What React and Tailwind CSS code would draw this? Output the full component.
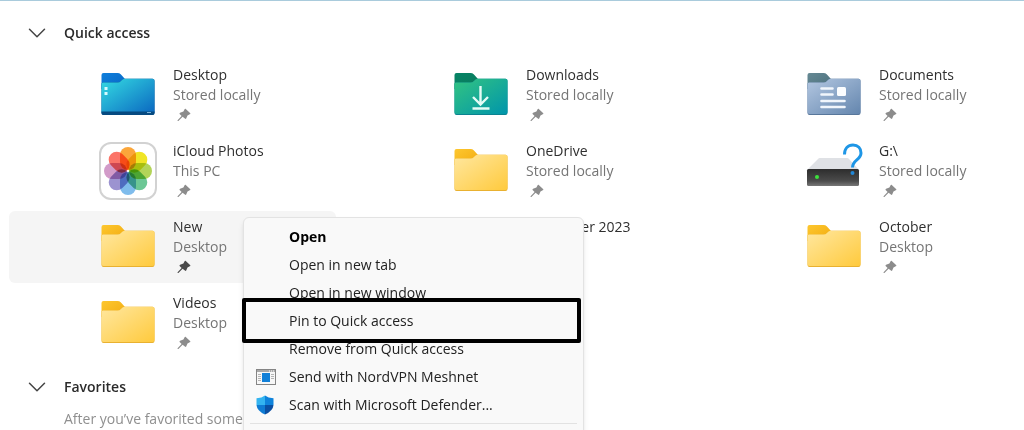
import { useId } from "react";
import { ChevronDown } from "lucide-react";

const folderColors = {
  yellow: { tab: ["#fdc72f", "#f2ab10"], body: ["#ffe79f", "#ffca3d"], edge: "#e9b130" },
  desktop: { tab: ["#0f7fdc", "#0867c4"], body: ["#34dbe2", "#0a66c0"], edge: "#06508f" },
  downloads: { tab: ["#068466", "#0b7a5c"], body: ["#33c481", "#0095ab"], edge: "#0b8390" },
  documents: { tab: ["#668994", "#4b707d"], body: ["#b3c7e1", "#6486ae"], edge: "#58779b" },
};

function Folder({ color, children }) {
  const id = useId();
  const c = folderColors[color];
  return (
    <svg viewBox="0 0 58 58" className="size-[58px] shrink-0" aria-hidden="true">
      <defs>
        <linearGradient id={id + "tab"} x1="0" y1="0" x2="1" y2="1">
          <stop offset="0" stopColor={c.tab[0]} />
          <stop offset="1" stopColor={c.tab[1]} />
        </linearGradient>
        <linearGradient id={id + "body"} x1="0" y1="0" x2="1" y2="1">
          <stop offset="0" stopColor={c.body[0]} />
          <stop offset="1" stopColor={c.body[1]} />
        </linearGradient>
      </defs>
      <path d="M2.500 9a2 2 0 0 1 2-2h14q2 0 3.200 1.300L26 13v10H2.500z" fill={`url(#${id}tab)`} />
      <path d="M2.500 18q0-1.500 1.500-1.500h14.500q2 0 3.500-1.600l1.200-1.100q1.200-1.100 3-1.100H53.500a2 2 0 0 1 2 2V47a2 2 0 0 1-2 2H4.500a2 2 0 0 1-2-2z" fill={c.edge} />
      <path d="M2.500 18q0-1.500 1.500-1.500h14.500q2 0 3.500-1.600l1.200-1.100q1.200-1.100 3-1.100H53.500a2 2 0 0 1 2 2V46a2 2 0 0 1-2 2H4.500a2 2 0 0 1-2-2z" fill={`url(#${id}body)`} />
      {children}
    </svg>
  );
}

function DesktopIcon() {
  return (
    <Folder color="desktop">
      <path d="M2.500 45.500h53v1.500a2 2 0 0 1-2 2H4.500a2 2 0 0 1-2-2z" fill="#064a80" />
      <path d="M5.500 21h3v3h-3zM5.500 26h3v3h-3z" fill="#d5fbff" />
      <path d="M48 46.500h4" stroke="#7db4d8" />
    </Folder>
  );
}

function DownloadsIcon() {
  return (
    <Folder color="downloads">
      <path d="M28.500 20v18M21 31l7.500 7.500L36 31M20.500 42.500h17" fill="none" stroke="#e4fbf6" strokeWidth="2.400" />
    </Folder>
  );
}

function DocumentsIcon() {
  return (
    <Folder color="documents">
      <path d="M16.500 22.500h11M16.500 28.500h11M16.500 35h23M16.500 41h23" stroke="#f1f6fc" strokeWidth="2.600" strokeLinecap="round" />
      <rect x="32" y="21" width="9" height="9" rx="1.500" fill="#fbfdff" />
    </Folder>
  );
}

function FolderIcon() {
  return <Folder color="yellow" />;
}

const petals = ["#fba63a", "#f0e526", "#b3d458", "#6cc795", "#7fbcec", "#9c93d0", "#d29bc9", "#fb7468"];

function PhotosIcon() {
  return (
    <svg viewBox="0 0 58 58" className="size-[58px] shrink-0" aria-hidden="true">
      <rect x="1" y="1" width="56" height="56" rx="11" fill="#fff" stroke="#d2d2d2" strokeWidth="2" />
      <g className="isolate">
        {petals.map((fill, i) => (
          <rect
            key={fill}
            x="21"
            y="5"
            width="16"
            height="23"
            rx="8"
            fill={fill}
            transform={`rotate(${i * 45} 29 29)`}
            className="mix-blend-multiply"
          />
        ))}
      </g>
    </svg>
  );
}

function DriveIcon() {
  const id = useId();
  return (
    <svg viewBox="0 0 58 58" className="size-[58px] shrink-0" aria-hidden="true">
      <defs>
        <linearGradient id={id} x1="0" y1="0" x2="0" y2="1">
          <stop offset="0" stopColor="#2d2d2d" />
          <stop offset="0.700" stopColor="#4b4b4b" />
          <stop offset="1" stopColor="#777" />
        </linearGradient>
      </defs>
      <path d="M13 17q.6-1 2-1h27q1.400 0 2 1l10 11H2z" fill="#dfe1e5" />
      <rect x="2" y="27" width="52" height="17" rx="1.500" fill={`url(#${id})`} />
      <circle cx="12" cy="35" r="2" fill="#3be23b" />
      <path d="M39.500 12.500C39.500 6.500 43 3 48 3s8 3.500 8 8c0 7-8.500 7-8.500 14.500" fill="none" stroke="#1e96e6" strokeWidth="3" />
      <circle cx="47.500" cy="31" r="2" fill="#2187d6" />
    </svg>
  );
}

function Pin({ dark }) {
  return (
    <svg viewBox="0 0 14 14" className={dark ? "size-3.5 fill-[#4a4a4a]" : "size-3.5 fill-[#8c8c8c]"} aria-hidden="true">
      <path d="M8.500.8 13.300 5.200Q13.600 6 12.700 6.300L10.500 7.500 9.200 10.500Q8.600 11.300 7.900 10.600L5.600 8.700 1.400 13H.6V12.200L4.600 7.900 2.600 6Q2.200 5.200 3.100 4.800L6.400 3.600 7.600 1.200Q8 .4 8.500.8z" />
    </svg>
  );
}

function AppWindowIcon() {
  return (
    <svg viewBox="0 0 20 16" className="h-4 w-5" aria-hidden="true">
      <rect x=".5" y=".5" width="19" height="15" fill="#f7f7f7" stroke="#858585" />
      <path d="M1 2h18" stroke="#a9a9a9" strokeWidth="2" />
      <path d="M13 2h1M15 2h1M17 2h1" stroke="#fff" />
      <path d="M2 5.500h3M2 7.500h3M2 9.500h3M2 11.500h3M15 5.500h3M15 7.500h3M15 9.500h3" stroke="#b5b5b5" />
      <rect x="6" y="4" width="8" height="9" fill="#1180d8" />
    </svg>
  );
}

function DefenderIcon() {
  return (
    <svg viewBox="0 0 18 20" className="h-5 w-[18px]" aria-hidden="true">
      <path d="M9 .5Q6 3 .5 3.200V10H9z" fill="#33b4f0" />
      <path d="M9 .5Q12 3 17.500 3.200V10H9z" fill="#0f83db" />
      <path d="M.5 10Q1 16 9 19.500V10z" fill="#0f7bd3" />
      <path d="M17.500 10Q17 16 9 19.500V10z" fill="#0a4fa2" />
    </svg>
  );
}

const places = [
  { name: "Desktop", location: "Stored locally", Icon: DesktopIcon },
  { name: "Downloads", location: "Stored locally", Icon: DownloadsIcon },
  { name: "Documents", location: "Stored locally", Icon: DocumentsIcon },
  { name: "iCloud Photos", location: "This PC", Icon: PhotosIcon },
  { name: "OneDrive", location: "Stored locally", Icon: FolderIcon },
  { name: "G:\\", location: "Stored locally", Icon: DriveIcon },
  { name: "New", location: "Desktop", Icon: FolderIcon, selected: true },
  { name: "November 2023", location: "Desktop", Icon: FolderIcon },
  { name: "October", location: "Desktop", Icon: FolderIcon },
  { name: "Videos", location: "Desktop", Icon: FolderIcon },
];

const menuItems = [
  { label: "Open", bold: true },
  { label: "Open in new tab" },
  { label: "Open in new window" },
  { label: "Pin to Quick access" },
  { label: "Remove from Quick access" },
  { label: "Send with NordVPN Meshnet", Icon: AppWindowIcon },
  { label: "Scan with Microsoft Defender...", Icon: DefenderIcon },
];

function SectionHeader({ title }) {
  return (
    <h2>
      <button type="button" className="flex h-11 items-center gap-3 pl-[22px] font-semibold text-[#2b2b2b]">
        <ChevronDown className="size-[30px] text-[#444]" strokeWidth={1.2} />
        {title}
      </button>
    </h2>
  );
}

function Place({ name, location, Icon, selected }) {
  return (
    <li className={selected ? "flex h-[72px] items-center gap-4 rounded-md bg-[#f5f5f5] pl-[90px]" : "flex h-[72px] items-center gap-4 rounded-md pl-[90px]"}>
      <Icon />
      <div className="leading-5">
        <p className="text-[#2f2f2f]">{name}</p>
        <p className="text-[#757575]">{location}</p>
        <div className="flex h-5 items-center pl-1">
          <Pin dark={selected} />
        </div>
      </div>
    </li>
  );
}

function ContextMenu() {
  return (
    <div role="menu" className="absolute top-[216px] left-[243px] w-[341px] rounded-md border border-[#e3e3e3] bg-[#f9f9f9] pt-[5px] pb-8 shadow-md">
      {menuItems.map(({ label, bold, Icon }) => (
        <button
          key={label}
          type="button"
          role="menuitem"
          className={bold ? "flex h-7 w-full items-center pl-3 font-bold text-black" : "flex h-7 w-full items-center pl-3 text-[#222]"}
        >
          <span className="flex w-[33px] items-center">{Icon && <Icon />}</span>
          {label}
        </button>
      ))}
      <hr className="mx-1.5 mt-1 border-[#e2e2e2]" />
      <div className="pointer-events-none absolute top-20 -left-0.5 h-[45px] w-[339px] rounded-xs border-4 border-black" />
    </div>
  );
}

export default function App() {
  return (
    <main className="relative min-h-screen overflow-hidden border-t border-[#a9cbdc] bg-white pt-2.5 font-['Open_Sans','Noto_Sans',sans-serif] text-sm">
      <section>
        <SectionHeader title="Quick access" />
        <ul className="mt-1 -mr-[18px] ml-[9px] grid grid-cols-3 gap-x-[26px] gap-y-1">
          {places.map((place) => (
            <Place key={place.name} {...place} />
          ))}
        </ul>
      </section>
      <section className="mt-1.5">
        <SectionHeader title="Favorites" />
        <p className="pl-16 leading-5 text-[#8f8f8f]">After you’ve favorited some</p>
      </section>
      <ContextMenu />
    </main>
  );
}
